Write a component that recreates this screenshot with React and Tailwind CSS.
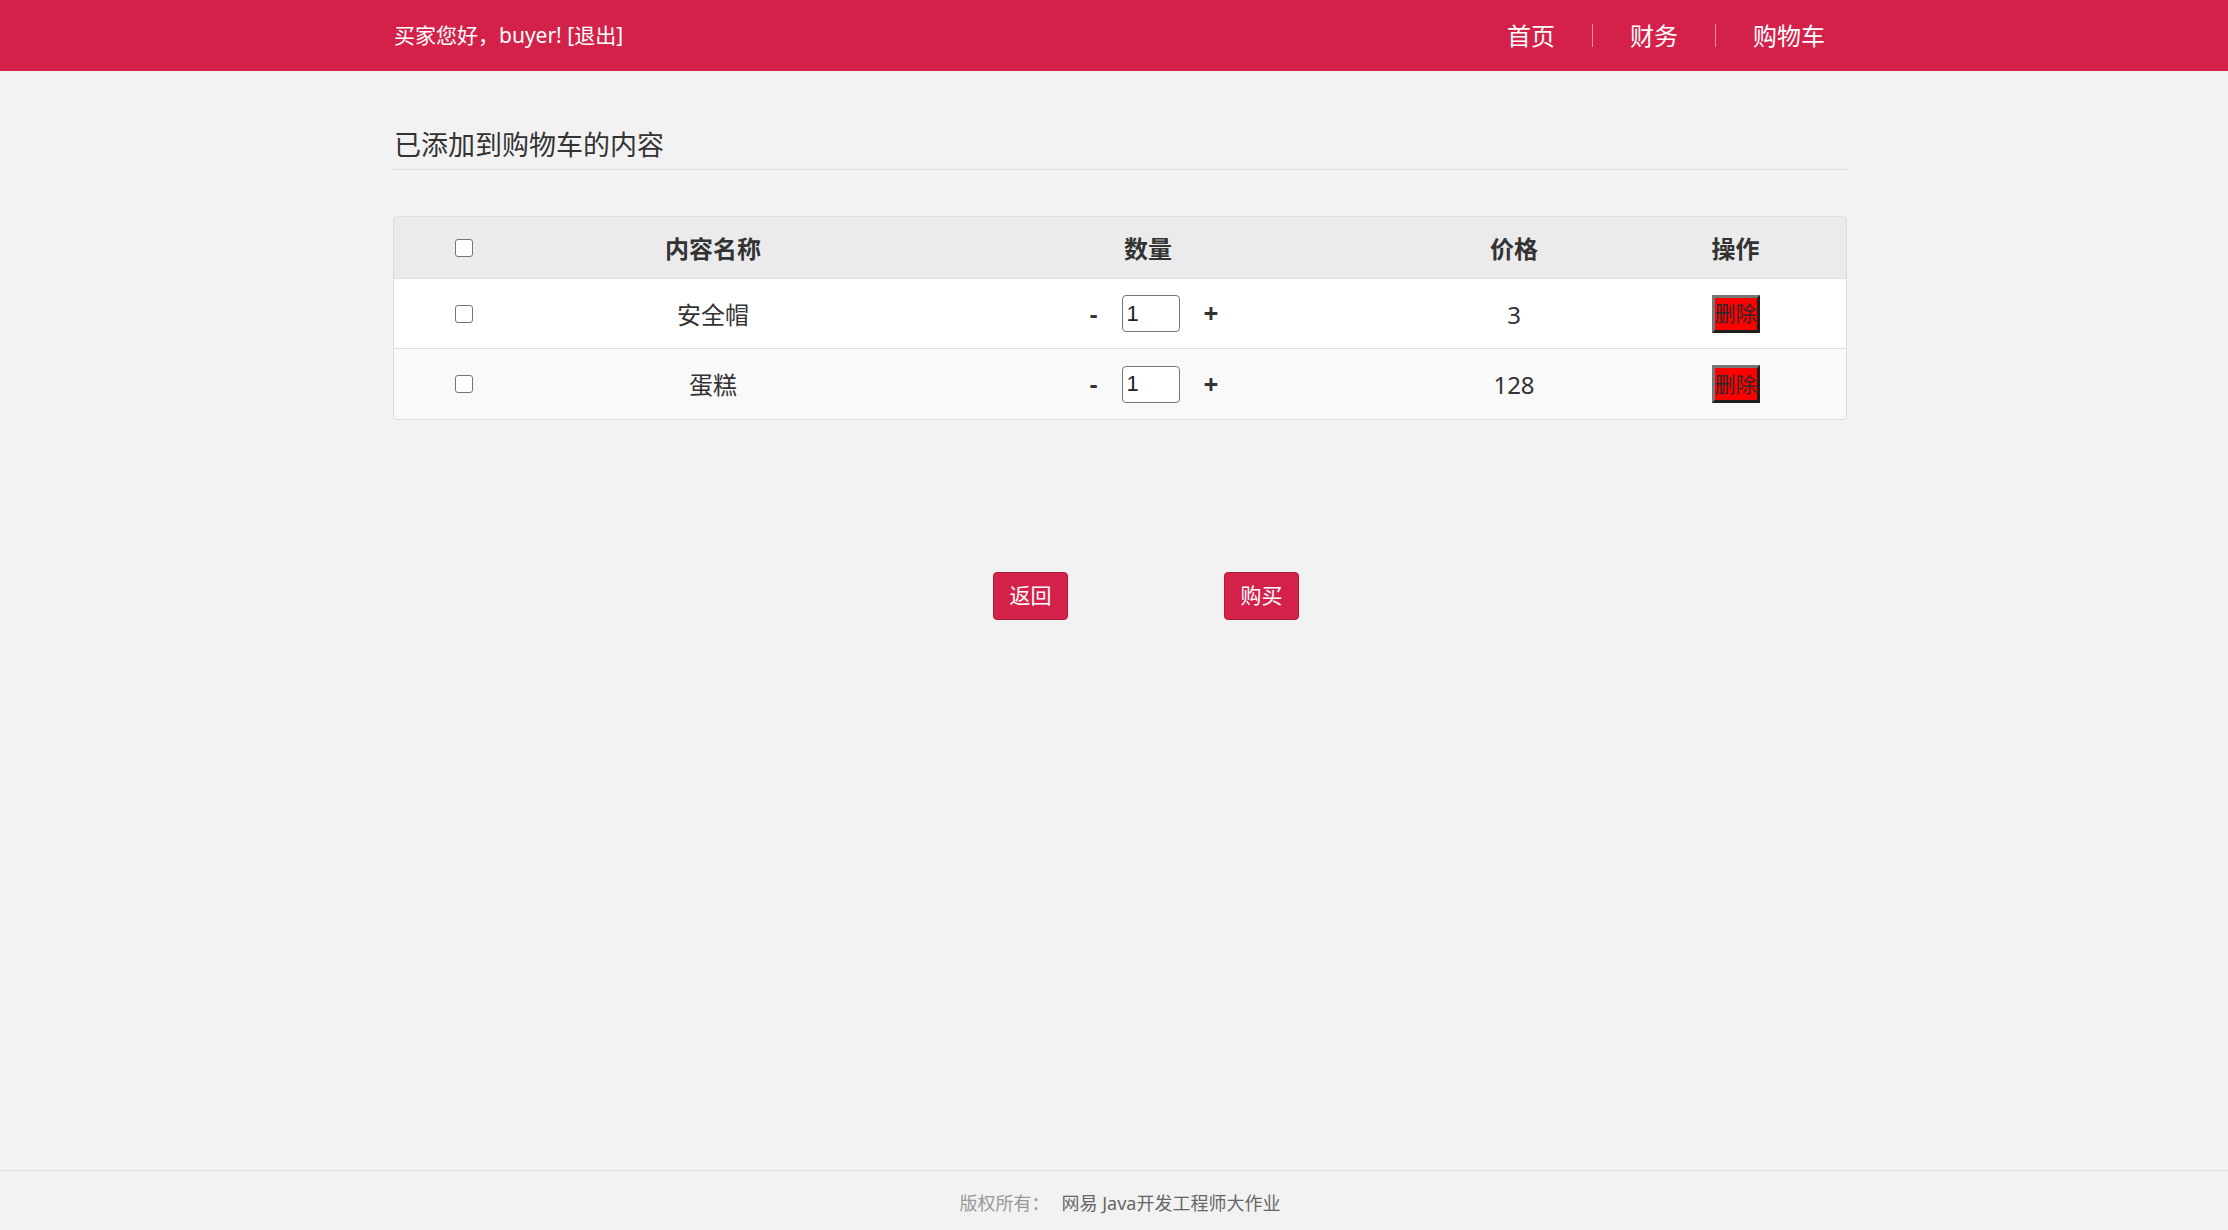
import React from 'react';

const items = [
  { id: 1, name: '安全帽', qty: 1, price: 3 },
  { id: 2, name: '蛋糕', qty: 1, price: 128 },
];

function Box() {
  return (
    <input
      type="checkbox"
      className="appearance-none w-[18px] h-[18px] border border-[#767676] rounded-[3px] bg-white"
    />
  );
}

export default function App() {
  return (
    <div className="min-h-screen flex flex-col bg-[#f2f2f2] text-[#333] font-['Noto_Sans','Noto_Sans_CJK_SC',sans-serif]">
      <header className="h-[71px] bg-[#d4214a] text-white">
        <div className="ml-[393px] w-[1454px] h-full flex items-center justify-between">
          <div className="text-[21px] pl-[1px]">买家您好，buyer! [退出]</div>
          <nav className="flex items-center gap-[37px] mr-[22px] text-[24px]">
            <a href="#">首页</a>
            <span className="w-px h-[23px] bg-white/50" />
            <a href="#">财务</a>
            <span className="w-px h-[23px] bg-white/50" />
            <a href="#">购物车</a>
          </nav>
        </div>
      </header>

      <main className="ml-[393px] w-[1454px]">
        <div className="pt-[54px] pb-[4px] border-b border-[#ddd]">
          <h2 className="text-[27px] leading-[40px] pl-[1px]">已添加到购物车的内容</h2>
        </div>

        <div className="mt-[46px] border border-[#ddd] rounded-[4px] overflow-hidden text-[24px]">
          <div className="grid grid-cols-[139px_360px_510px_222px_221px] h-[62px] items-center bg-[#ebebeb] border-b border-[#ddd] font-bold text-center">
            <div className="flex justify-center"><Box /></div>
            <div className="pt-[2px]">内容名称</div>
            <div className="pt-[2px]">数量</div>
            <div className="pt-[2px]">价格</div>
            <div className="pt-[2px]">操作</div>
          </div>
          {items.map((it, i) => (
            <div
              key={it.id}
              className={`grid grid-cols-[139px_360px_510px_222px_221px] h-[70px] items-center text-center ${i === 0 ? 'bg-white border-b border-[#ddd]' : 'bg-[#f9f9f9]'}`}
            >
              <div className="flex justify-center"><Box /></div>
              <div className="pt-[2px]">{it.name}</div>
              <div className="flex items-center justify-center pl-[12px] font-bold">
                <span className="w-[8px]">-</span>
                <input
                  type="text"
                  defaultValue={it.qty}
                  className="ml-[24px] w-[58px] h-[37px] border border-[#767676] rounded-[4px] bg-white pl-[4px] text-[22px] font-normal text-[#222] font-['Liberation_Sans',sans-serif]"
                />
                <span className="ml-[24px] text-[26px]">+</span>
              </div>
              <div className="pt-[2px]">{it.price}</div>
              <div className="flex justify-center">
                <button className="w-[48px] h-[38px] bg-[#ff0000] border-[3px] border-t-[#767676] border-l-[#767676] border-b-[#1e1e1e] border-r-[#1e1e1e] text-[21px] leading-none text-[#2a2a2a] flex items-center justify-center overflow-hidden whitespace-nowrap">
                  删除
                </button>
              </div>
            </div>
          ))}
        </div>

        <div className="flex pl-[600px] gap-[156px] mt-[152px]">
          <button className="w-[75px] h-[48px] bg-[#d4214a] border border-[#b01a3d] rounded-[4px] text-white text-[21px]">返回</button>
          <button className="w-[75px] h-[48px] bg-[#d4214a] border border-[#b01a3d] rounded-[4px] text-white text-[21px]">购买</button>
        </div>
      </main>

      <footer className="mt-auto h-[60px] border-t border-[#ddd] flex items-center justify-center pt-[6px] pl-[12px] text-[18px]">
        <span className="text-[#999]">版权所有：</span>
        <span className="ml-[12px] text-[#666]">网易 Java开发工程师大作业</span>
      </footer>
    </div>
  );
}
